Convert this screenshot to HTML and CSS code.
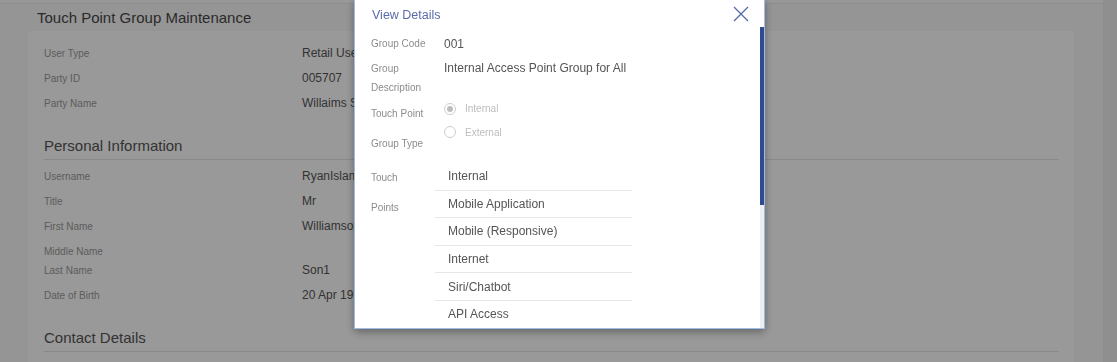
FILE: index.html
```html
<!DOCTYPE html>
<html lang="en">
<head>
<meta charset="utf-8">
<title>Touch Point Group Maintenance</title>
<link rel="stylesheet" href="styles.css">
</head>
<body>
<div class="app">
  <main class="page">
    <div class="topbar"></div>
    <h1 class="page-title">Touch Point Group Maintenance</h1>
    <section class="card">
      <div class="row"><span class="lbl">User Type</span><span class="val">Retail User</span></div>
      <div class="row"><span class="lbl">Party ID</span><span class="val">005707</span></div>
      <div class="row"><span class="lbl">Party Name</span><span class="val">Willaims Son1</span></div>

      <h2 class="sec">Personal Information</h2>
      <div class="row"><span class="lbl">Username</span><span class="val">RyanIslam</span></div>
      <div class="row"><span class="lbl">Title</span><span class="val">Mr</span></div>
      <div class="row"><span class="lbl">First Name</span><span class="val">Williamson</span></div>
      <div class="row short"><span class="lbl">Middle Name</span><span class="val"></span></div>
      <div class="row"><span class="lbl">Last Name</span><span class="val">Son1</span></div>
      <div class="row"><span class="lbl">Date of Birth</span><span class="val">20 Apr 1990</span></div>

      <h2 class="sec">Contact Details</h2>
    </section>
  </main>
  <div class="rail"></div>
</div>

<div class="overlay"></div>

<div class="modal" role="dialog" aria-label="View Details">
  <header class="modal-head">
    <span class="modal-title">View Details</span>
    <button class="close" aria-label="Close">
      <svg width="16" height="16" viewBox="0 0 16 16"><path d="M1 1 L15 15 M15 1 L1 15" stroke="#5568a8" stroke-width="1.3" fill="none"/></svg>
    </button>
  </header>
  <div class="modal-main">
    <div class="modal-body">
      <div class="mrow gc">
        <span class="mlbl">Group Code</span>
        <span class="mval">001</span>
      </div>
      <div class="mrow gd">
        <span class="mlbl"><span class="ln">Group</span><span class="ln">Description</span></span>
        <span class="mval">Internal Access Point Group for All</span>
      </div>
      <div class="mrow tt">
        <span class="mlbl tall"><span class="ln">Touch Point</span><span class="ln">Group Type</span></span>
        <div class="radios">
          <label class="radio"><span class="dot on"></span>Internal</label>
          <label class="radio"><span class="dot"></span>External</label>
        </div>
      </div>
      <div class="mrow tp">
        <span class="mlbl tall"><span class="ln">Touch</span><span class="ln">Points</span></span>
        <ul class="list">
          <li>Internal</li>
          <li>Mobile Application</li>
          <li>Mobile (Responsive)</li>
          <li>Internet</li>
          <li>Siri/Chatbot</li>
          <li>API Access</li>
        </ul>
      </div>
    </div>
    <div class="vscroll"><div class="thumb"></div></div>
  </div>
</div>
</body>
</html>
```

FILE: styles.css
```css
* { box-sizing: border-box; }

html, body {
  margin: 0;
  padding: 0;
  height: 100%;
  overflow: hidden;
}

body {
  font-family: "Liberation Sans", Arial, sans-serif;
  background: #f8f8f8;
}

.app {
  display: flex;
  height: 100vh;
}

.page {
  flex: 1;
  background: #f8f8f8;
  min-width: 0;
}

.rail {
  width: 14px;
  flex: none;
  background: #eeeeee;
}

.topbar {
  height: 4px;
  background: #fdfdfd;
  border-bottom: 1px solid #ebebeb;
}

.page-title {
  margin: 0;
  padding-left: 37px;
  font-size: 15px;
  line-height: 27px;
  font-weight: normal;
  color: #484848;
}

.card {
  margin: 0 29px 0 28px;
  background: #ffffff;
  padding: 10px 15px 20px 16px;
}

.row {
  display: flex;
  padding: 6px 0;
  line-height: 13px;
}
.row.short { padding-bottom: 0; }

.lbl {
  width: 258px;
  flex: none;
  font-size: 10px;
  color: #9a9a9a;
}

.val {
  font-size: 12px;
  color: #555555;
}

.sec {
  margin: 20px 0 4px;
  padding-bottom: 3px;
  border-bottom: 1px solid #e4e4e4;
  font-size: 15px;
  line-height: 20px;
  font-weight: normal;
  color: #555555;
}

.overlay {
  position: fixed;
  inset: 0;
  background: rgba(0, 0, 0, 0.4);
}

.modal {
  position: fixed;
  left: 354px;
  top: -1px;
  width: 411px;
  height: 330px;
  background: #ffffff;
  border: 1px solid #9cbde6;
  box-shadow: 0 3px 8px rgba(0, 0, 0, 0.35);
  display: flex;
  flex-direction: column;
}

.modal-head {
  height: 27px;
  flex: none;
  display: flex;
  align-items: center;
  justify-content: space-between;
  padding: 2px 15px 0 17px;
}

.modal-title {
  font-size: 12.5px;
  color: #5a6cab;
}

.close {
  border: 0;
  background: none;
  padding: 0;
  width: 16px;
  height: 16px;
  display: flex;
  margin-top: -2px;
}

.modal-main {
  flex: 1;
  min-height: 0;
  display: flex;
}

.modal-body {
  flex: 1;
  overflow: hidden;
  padding: 7px 0 0 16px;
}

.vscroll {
  width: 4px;
  flex: none;
  background: #eceef2;
}
.thumb {
  height: 178px;
  background: #2f4c93;
}

.mrow {
  display: flex;
  align-items: flex-start;
}
.mrow.gd { margin-top: 5px; }
.mrow.tt { margin-top: 2px; }
.mrow.tp { margin-top: 4px; }

.mlbl {
  width: 58px;
  margin-right: 6px;
  flex: none;
  font-size: 10px;
  line-height: 20px;
  color: #8c8c8c;
}
.ln { display: block; white-space: nowrap; }
.gd .mlbl, .gd .mval { line-height: 19px; }
.mlbl.tall { line-height: 30px; }

.mval {
  padding-left: 9px;
  font-size: 12px;
  line-height: 20px;
  color: #555555;
}

.radios {
  margin-top: -2px;
  padding-left: 9px;
  display: flex;
  flex-direction: column;
}

.radio {
  height: 23.5px;
  display: flex;
  align-items: center;
  gap: 9px;
  font-size: 10px;
  color: #bdbdbd;
}

.dot {
  width: 12px;
  height: 12px;
  border-radius: 50%;
  border: 1px solid #cfcfcf;
  display: flex;
  align-items: center;
  justify-content: center;
}
.dot.on::after {
  content: "";
  width: 6px;
  height: 6px;
  border-radius: 50%;
  background: #bdbdbd;
}

.list {
  list-style: none;
  margin: 0;
  padding: 0;
  width: 197px;
}
.list li {
  padding: 5.3px 13px;
  line-height: 16px;
  border-bottom: 1px solid #e6e6e6;
  font-size: 12px;
  color: #555555;
}
```
